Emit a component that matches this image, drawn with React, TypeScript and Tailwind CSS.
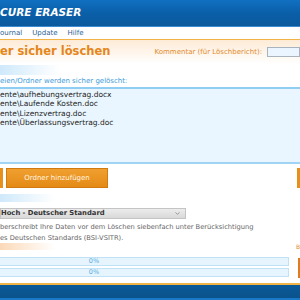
import { ChevronDown } from 'lucide-react';

const files = [
  'ente\\aufhebungsvertrag.docx',
  'ente\\Laufende Kosten.doc',
  'ente\\Lizenzvertrag.doc',
  'ente\\Überlassungsvertrag.doc',
];

export default function App() {
  return (
    <div className="w-[300px] h-[300px] overflow-hidden bg-white flex flex-col font-['DejaVu_Sans',sans-serif]">
      {/* title bar */}
      <div className="h-[27px] shrink-0 bg-gradient-to-b from-[#1170c2] via-[#0a5fa8] to-[#0b5a9c] flex items-center border-b border-[#3d8bd0]">
        <span className="text-white font-bold italic text-[10.5px]">CURE ERASER</span>
      </div>
      {/* menu */}
      <div className="h-[12px] shrink-0 flex items-center gap-[10px] text-[7px] text-[#2b5f95] bg-white">
        <span>ournal</span>
        <span>Update</span>
        <span>Hilfe</span>
      </div>
      <div className="h-[1px] shrink-0 bg-[#f2b446]" />
      {/* heading band */}
      <div className="h-[24px] shrink-0 bg-gradient-to-b from-[#fdebd6] to-white flex items-center justify-between">
        <span className="text-[#e5861a] font-bold text-[11.5px]">er sicher löschen</span>
        <div className="flex items-center gap-[5px] text-[7px] text-[#e28a2a]">
          <span>Kommentar (für Löschbericht):</span>
          <div className="w-[33px] h-[10px] border border-[#a9b3bd] bg-[#eaf5ff]" />
        </div>
      </div>
      {/* section tab */}
      <div className="h-[10px] shrink-0 mt-[1px] w-[60px] bg-gradient-to-r from-[#cfe9fb] to-white" />
      <div className="h-[12px] shrink-0 flex items-center text-[7px] text-[#3d9ad8]">
        eien/Ordner werden sicher gelöscht:
      </div>
      <div className="h-[2px] shrink-0 bg-[#8fcdf2]" />
      {/* file list */}
      <div className="h-[75px] shrink-0 bg-[#eaf6ff] border-b-2 border-[#9fd4f4] flex flex-col pt-[1px] text-[7.5px] text-[#1d1d1d] leading-[9.4px]">
        {files.map(f => (
          <span key={f}>{f}</span>
        ))}
      </div>
      {/* buttons */}
      <div className="h-[20px] shrink-0 mt-[4px] flex items-stretch justify-between">
        <div className="flex gap-[3px]">
          <div className="w-[3px] bg-[#e8901c]" />
          <div className="w-[102px] bg-gradient-to-b from-[#f0a030] to-[#e48a14] border border-[#d07a10] flex items-center justify-center text-[7px] text-[#fff5e0]">
            Ordner hinzufügen
          </div>
        </div>
        <div className="w-[3px] bg-[#e8901c]" />
      </div>
      {/* second section tab */}
      <div className="h-[8px] shrink-0 mt-[6px] w-[55px] bg-gradient-to-r from-[#cfe9fb] to-white" />
      {/* select */}
      <div className="h-[11px] shrink-0 mt-[6px] w-[186px] bg-gradient-to-b from-[#ececec] to-[#d9d9d9] border border-[#c4c4c4] flex items-center justify-between pr-[4px]">
        <span className="text-[6.8px] font-bold text-[#333]">Hoch - Deutscher Standard</span>
        <ChevronDown size={7} strokeWidth={2} className="text-[#666]" />
      </div>
      {/* description */}
      <div className="shrink-0 mt-[3px] text-[6.7px] text-[#666] leading-[10.5px]">
        <div>berschreibt Ihre Daten vor dem Löschen siebenfach unter Berücksichtigung</div>
        <div>es Deutschen Standards (BSI-VSITR).</div>
      </div>
      {/* third tab + label */}
      <div className="h-[7px] shrink-0 flex justify-between">
        <div className="w-[55px] bg-gradient-to-r from-[#fbd9b8] to-white" />
        <span className="text-[6px] text-[#e28a2a] leading-[7px]">B</span>
      </div>
      {/* progress */}
      <div className="shrink-0 mt-[7px] flex justify-between">
        <div className="flex flex-col gap-[2px]">
          <div className="w-[290px] h-[9px] bg-[#e6f4fd] border border-[#bfe2f6] flex items-center justify-center text-[6.5px] text-[#5aaee2] -ml-[1px]">
            <span className="ml-[-100px]">0%</span>
          </div>
          <div className="w-[290px] h-[9px] bg-[#e6f4fd] border border-[#bfe2f6] flex items-center justify-center text-[6.5px] text-[#5aaee2] -ml-[1px]">
            <span className="ml-[-100px]">0%</span>
          </div>
        </div>
        <div className="w-[2px] h-[20px] mt-[1px] bg-[#e07a1a]" />
      </div>
      {/* footer */}
      <div className="mt-[5px] flex-1 flex flex-col">
        <div className="h-[2px] bg-[#f2b446]" />
        <div className="flex-1 bg-gradient-to-b from-[#0b5a98] to-[#0a528c] border-b-2 border-[#1a78c8]" />
      </div>
    </div>
  );
}
